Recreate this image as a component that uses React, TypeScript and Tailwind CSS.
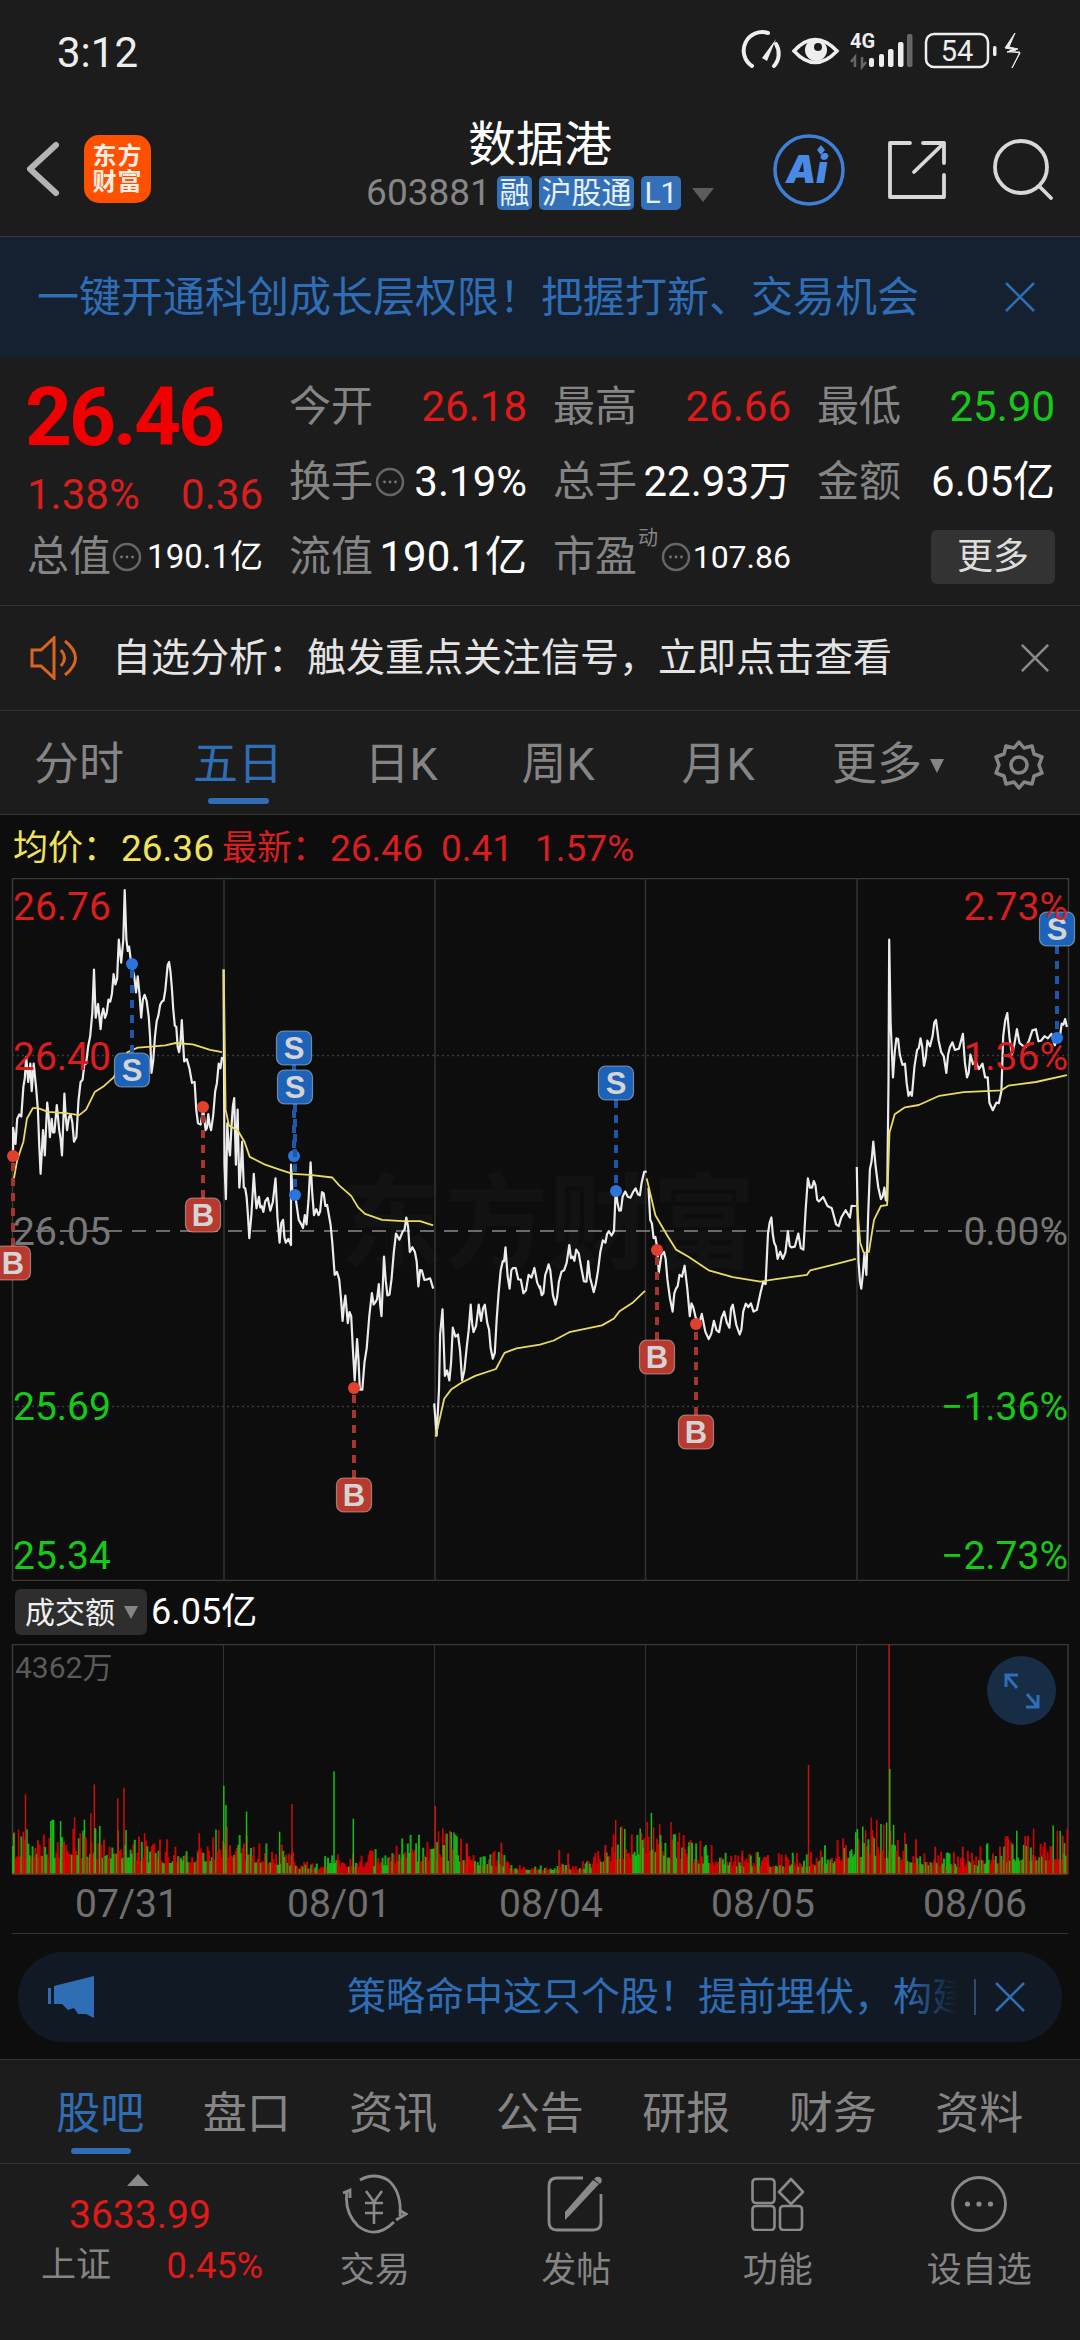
import React from "react";

const L: number[][] = [
  [38,600,38,540,45,575,50,520,62,515,68,450,76,385,82,440,88,400,92,460,98,400,105,455,110,500,118,640,125,545,130,600,137,485,145,560,150,520,158,550,165,490,172,545,180,600,187,465,195,545,205,510,215,570,222,560,228,480,240,435,250,400,262,340,268,290,273,195,278,300,285,270,292,325,300,280,310,290,320,265,330,205,340,215,345,130,352,180,358,130,362,22,367,130,375,145,385,195,395,245,400,210,410,300,420,250,432,300,440,420,450,340,460,295,470,265,480,240,487,185,495,200,503,280,512,320,520,375,528,305,535,395,550,410,565,440,575,530,590,500,597,545,605,510,613,545,625,460,635,400,645,385],
  [649,195,652,620,656,695,660,530,668,600,672,540,680,475,685,620,690,500,695,670,703,570,708,670,716,690,724,780,737,640,745,715,752,690,760,710,770,700,785,720,800,650,812,790,822,740,830,790,845,795,845,620,850,690,860,700,875,750,885,730,890,750,902,615,912,730,925,730,935,680,945,710,955,730,965,790,972,860,985,870,995,960,1003,905,1010,965,1020,950,1030,1090,1037,1000,1045,1110,1052,1110,1065,1020,1080,900,1090,920,1100,880,1108,950,1115,820,1125,905,1137,870,1150,770,1170,765,1180,735,1190,810,1205,810,1215,885,1225,850,1240,870,1258,890],
  [1261,1140,1268,1210,1275,1110,1278,990,1285,935,1292,1080,1305,1090,1315,975,1330,990,1342,1090,1355,1020,1367,925,1375,985,1390,925,1397,960,1408,925,1415,965,1425,1020,1437,1030,1448,900,1460,830,1468,800,1480,890,1490,845,1505,870,1520,900,1535,860,1552,845,1568,890],
];
const R: number[][] = [
  [0,885,10,900,20,850,30,850,45,925,55,875,70,850,85,795,95,820,105,805,120,845,135,875,140,830,150,880,162,880,175,810,190,790,200,765,215,765,220,670,230,720,240,690,255,690,270,680,285,685,295,660,310,635],
  [315,670,320,740,330,780,340,800,345,855,360,810,370,870,385,940,395,890,405,860,420,840,435,950,445,930,460,960,470,945,490,1000,505,960,520,985,535,940,550,975,560,925,580,990,590,940,605,930,620,940,640,900,655,880,662,770,672,735,680,790,690,825,705,825,720,765,730,800,750,770,765,805,778,650,790,670,800,665,810,700,835,710,860,750,875,735,900,735,910,710,917,710],
  [920,625,925,830,933,890,942,815,948,860,958,630,968,570,975,625,990,695,1000,670,1008,700,1012,440,1014,130,1018,310,1025,430,1035,345,1045,380,1060,400,1070,470,1080,470,1095,370,1105,345,1115,405,1125,350,1140,340,1150,305,1165,375,1180,420,1190,365,1205,370,1228,335,1240,430,1250,380,1265,395,1285,400,1300,430,1305,485,1325,485,1340,460,1345,340,1357,290,1370,380,1385,325,1400,360,1420,350,1440,325,1455,350,1475,345,1495,360,1510,340,1520,315,1530,320],
];
const AL: number[][] = [
  [38,660,50,610,68,570,78,520,95,497,110,497,140,505,190,508,230,512,250,500,275,462,300,450,330,430,370,375,400,365,440,363,480,360,510,355,560,358,610,370,645,375],
  [650,195,655,500,665,535,690,545,710,570,725,603,770,620,810,630,850,640,900,642,965,648,985,665,1020,688,1040,713,1060,727,1110,740,1170,743,1220,743,1258,752],
  [1265,1212,1272,1190,1290,1130,1310,1110,1340,1095,1380,1080,1440,1065,1465,1030,1500,1020,1568,1012],
];
const AR: number[][] = [
  [0,1012,40,1003,85,985,180,970,215,955,230,940,270,920,305,895],
  [310,650,335,730,370,775,395,805,430,820,490,850,560,865,640,875,680,870,775,860,785,850,850,838,917,825],
  [920,700,930,790,940,812,955,810,970,740,990,710,1008,708,1015,550,1030,510,1060,495,1100,490,1160,470,1230,462,1340,458,1360,448,1440,440,1530,425],
];

function mulberry(a: number) {
  return () => {
    a |= 0; a = (a + 0x6d2b79f5) | 0;
    let t = Math.imul(a ^ (a >>> 15), 1 | a);
    t = (t + Math.imul(t ^ (t >>> 7), 61 | t)) ^ t;
    return ((t ^ (t >>> 14)) >>> 0) / 4294967296;
  };
}

function toPath(a: number[], off: number) {
  let d = "";
  for (let i = 0; i < a.length; i += 2) {
    d += (i === 0 ? "M" : "L") + (off + a[i] / 2.904).toFixed(1) + " " + (880 + a[i + 1] / 2.178).toFixed(1);
  }
  return d;
}
const jr = mulberry(7);
function jag(a: number[]) {
  const out: number[] = [];
  for (let i = 0; i < a.length - 2; i += 2) {
    out.push(a[i], a[i + 1]);
    const dx = a[i + 2] - a[i];
    if (dx >= 8) {
      const k = jr() > 0.5 ? 1 : -1;
      out.push(a[i] + dx * 0.5, (a[i + 1] + a[i + 3]) / 2 + k * (6 + jr() * 12));
    }
  }
  out.push(a[a.length - 2], a[a.length - 1]);
  return out;
}
const priceD = [
  toPath(jag(L[0]), 0),
  toPath(jag(L[1]), 0),
  toPath(jag(L[2]), 0) + toPath(jag(R[0]), 540).replace("M", "L"),
  toPath(jag(R[1]), 540),
  toPath(jag(R[2]), 540),
].join(" ");
const avgD = [
  toPath(AL[0], 0),
  toPath(AL[1], 0),
  toPath(AL[2], 0) + toPath(AR[0], 540).replace("M", "L"),
  toPath(AR[1], 540),
  toPath(AR[2], 540),
].join(" ");

const marks = [
  { t: "S", x: 132, y: 1070, dy: 964, from: 1053 },
  { t: "S", x: 294, y: 1048, dy: 1156, from: 1065 },
  { t: "S", x: 295, y: 1087, dy: 1195, from: 1104 },
  { t: "S", x: 616, y: 1083, dy: 1191, from: 1100 },
  { t: "S", x: 1057, y: 929, dy: 1038, from: 946 },
  { t: "B", x: 203, y: 1215, dy: 1107, from: 1198 },
  { t: "B", x: 13, y: 1263, dy: 1156, from: 1246 },
  { t: "B", x: 354, y: 1495, dy: 1388, from: 1478 },
  { t: "B", x: 657, y: 1357, dy: 1250, from: 1340 },
  { t: "B", x: 696, y: 1432, dy: 1324, from: 1415 },
];

const spikes: [number, number, number][] = [
  [37,643,1],[137,613,1],[171,655,1],[180,623,1],[132,700,1],[138,745,0],[325,617,0],[328,675,0],[358,695,0],[424,672,1],[406,755,0],[485,574,0],[513,716,0],[632,678,1],[728,788,1],[894,720,1],[949,742,1],[933,780,0],[959,765,0],[1174,555,1],[1291,193,1],[1292,567,0],[1245,747,0],[1267,768,1],[1078,812,1],[1463,768,1],[1543,767,1],[20,760,0],[34,755,1],[55,780,1],[93,785,1],[124,770,1],[183,750,0],[218,815,0],[288,810,1],[348,765,0],[1000,800,0],[1025,795,0],[1115,825,1],[1358,800,1],[1398,800,1],[1433,795,0],[1500,825,1],[812,810,1],[825,820,1],[879,795,1],[678,790,1],[644,795,0]
];
function buildBars() {
  const r = mulberry(42);
  const out: { x: number; h: number; c: string }[] = [];
  for (let x = 13; x < 1068; x += 1.4) {
    const z = x * 1.452;
    let env = 11;
    const bumps = [[40,50,16],[150,60,16],[330,50,14],[630,40,14],[940,50,22],[1250,30,18],[1300,30,12],[1470,30,10],[1540,30,16]];
    for (const [c, w, a] of bumps) env += a * Math.exp(-((z - c) * (z - c)) / (2 * w * w));
    if (z > 740 && z < 860) env *= 0.4;
    if (z > 430 && z < 470) env *= 0.5;
    const v = r();
    const h = 2 + env * (0.45 + v * v * 1.4);
    out.push({ x, h, c: r() > 0.45 ? "#e60000" : "#18c818" });
  }
  for (const [zx, zy, red] of spikes) out.push({ x: zx / 1.452, h: 1874 - (1580 + zy / 3), c: red ? "#d81010" : "#18c818" });
  return out;
}
const bars = buildBars();

function InfoDot({ className = "" }: { className?: string }) {
  return (
    <svg width="30" height="30" viewBox="0 0 30 30" className={className}>
      <circle cx="15" cy="15" r="13" fill="none" stroke="#666" strokeWidth="2.5" />
      <circle cx="9.5" cy="15" r="1.4" fill="#777" />
      <circle cx="15" cy="15" r="1.4" fill="#777" />
      <circle cx="20.5" cy="15" r="1.4" fill="#777" />
    </svg>
  );
}

function Cell({ label, value, color, info }: { label: string; value: string; color: string; info?: boolean }) {
  return (
    <div className="flex items-center justify-between w-[238px]">
      <div className="flex items-center">
        <span className="text-[42px] text-[#858585] leading-none">{label}</span>
        {info && <InfoDot className="ml-[2px]" />}
      </div>
      <span className={`text-[42px] leading-none ${color}`}>{value}</span>
    </div>
  );
}

function StatusIcons() {
  return (
    <svg width="300" height="50" viewBox="0 0 300 50">
      <path d="M22 41 A18.5 18.5 0 0 1 38 8" fill="none" stroke="#eee" strokeWidth="4" strokeLinecap="round" />
      <path d="M46 19 A18.5 18.5 0 0 1 44 41" fill="none" stroke="#eee" strokeWidth="4" strokeLinecap="round" />
      <path d="M32 33 L46 14 L37 36 Z" fill="#eee" />
      <path d="M64 26 Q85 3 107 26 Q85 49 64 26 Z" fill="none" stroke="#eee" strokeWidth="3.5" />
      <circle cx="86" cy="25" r="11" fill="#eee" />
      <circle cx="88" cy="22" r="4" fill="#1c1c1c" />
      <text x="120" y="23" fontSize="20" fontWeight="700" fill="#eee" fontFamily="Roboto, sans-serif">4G</text>
      <path d="M125 42 V32 L121 37 M132 32 V42 L136 37" fill="none" stroke="#666" strokeWidth="2.5" />
      <rect x="139" y="33" width="5" height="9" rx="2" fill="#eee" />
      <rect x="149" y="29" width="5" height="13" rx="2" fill="#eee" />
      <rect x="158" y="24" width="5.5" height="18" rx="2" fill="#eee" />
      <rect x="168" y="17" width="5.5" height="25" rx="2" fill="#eee" />
      <rect x="177" y="9" width="5.5" height="33" rx="2" fill="#666" />
      <rect x="196" y="9" width="62" height="33" rx="8" fill="none" stroke="#eee" strokeWidth="2.5" />
      <text x="227" y="36" fontSize="29" textAnchor="middle" fill="#eee" fontFamily="Roboto, sans-serif">54</text>
      <rect x="263" y="21" width="3.5" height="10" rx="1.5" fill="#eee" />
      <path d="M285 8 L275 23 L286 25 L277 27 L290 27 L282 43 L290 28 L279 26 L288 24 L279 22 Z" fill="#eee" stroke="#eee" strokeWidth="1" />
    </svg>
  );
}

function GearIcon() {
  return (
    <svg width="52" height="52" viewBox="0 0 52 52" fill="none" stroke="#858585" strokeWidth="3.5" strokeLinejoin="round">
      <path d="M26 3 L31 9 L39 7 L41 15 L49 18 L46 26 L49 34 L41 37 L39 45 L31 43 L26 49 L21 43 L13 45 L11 37 L3 34 L6 26 L3 18 L11 15 L13 7 L21 9 Z" />
      <circle cx="26" cy="26" r="8" />
    </svg>
  );
}

function CloseX({ color, size = 32, w = 2.6 }: { color: string; size?: number; w?: number }) {
  return (
    <svg width={size} height={size} viewBox="0 0 32 32" fill="none" stroke={color} strokeWidth={w}>
      <path d="M2 2 L30 30 M30 2 L2 30" />
    </svg>
  );
}

export default function App() {
  return (
    <div className="w-[1080px] h-[2340px] bg-[#1c1c1c] overflow-hidden text-white font-[Roboto,'Noto_Sans_CJK_SC',sans-serif]">
      {/* status */}
      <div className="h-[100px] flex items-start pt-[25px] justify-between pl-[57px] pr-[50px]">
        <span className="text-[42px] leading-[56px] text-[#eeeeee]">3:12</span>
        <StatusIcons />
      </div>
      {/* header */}
      <div className="h-[137px] flex border-b border-[#383c40]">
        <div className="w-[320px] flex items-start pl-[26px] pt-[35px]">
          <svg width="34" height="60" viewBox="0 0 34 60" fill="none" stroke="#b4b4b4" strokeWidth="6" strokeLinecap="round" strokeLinejoin="round" className="mt-[4px]">
            <path d="M30 6 L4 30 L30 54" />
          </svg>
          <div className="ml-[24px] w-[67px] h-[68px] rounded-[15px] bg-[#ff5000] flex flex-col items-center justify-center font-bold text-[24px] leading-[26px] tracking-[1px] text-[#ffeee6]">
            <span>东方</span>
            <span>财富</span>
          </div>
        </div>
        <div className="flex-1 flex flex-col items-center">
          <span className="text-[48px] leading-[62px] mt-[14px] text-white">数据港</span>
          <div className="flex items-center mt-[-1px] h-[36px]">
            <span className="text-[37px] text-[#868686] mr-[6px]">603881</span>
            <span className="h-[34px] w-[35px] bg-[#3470b8] rounded-[5px] text-[30px] leading-[33px] text-center text-[#e8f0fa]">融</span>
            <span className="h-[34px] w-[95px] ml-[7px] bg-[#3470b8] rounded-[5px] text-[30px] leading-[33px] text-center text-[#e8f0fa]">沪股通</span>
            <span className="h-[34px] w-[40px] ml-[7px] bg-[#3470b8] rounded-[5px] text-[30px] leading-[33px] text-center text-[#e8f0fa]">L1</span>
            <svg width="22" height="14" viewBox="0 0 22 14" className="ml-[11px] mt-[4px]"><path d="M0 0 H22 L11 14 Z" fill="#5c5c5c" /></svg>
          </div>
        </div>
        <div className="w-[320px] flex items-start pt-[33px] pl-[12px]">
          <svg width="74" height="74" viewBox="0 0 74 74">
            <circle cx="37" cy="37" r="34" fill="none" stroke="#3f7fd8" strokeWidth="3.5" />
            <text x="14" y="50" fontSize="38" fontWeight="900" fontStyle="italic" fill="#4a8ae6" fontFamily="Inter, sans-serif">Ai</text>
            <path d="M49 12 L53 17 L49 22 L45 17 Z" fill="#4a8ae6" />
          </svg>
          <svg width="60" height="60" viewBox="0 0 60 60" fill="none" stroke="#d8d8d8" strokeWidth="3.8" strokeLinecap="round" strokeLinejoin="round" className="ml-[41px] mt-[7px]">
            <path d="M23 3 H3 V57 H57 V35 M27 32 L57 3 M36 3 H57 V23" />
          </svg>
          <svg width="62" height="62" viewBox="0 0 62 62" fill="none" stroke="#d8d8d8" strokeWidth="3.8" strokeLinecap="round" className="ml-[45px] mt-[5px]">
            <circle cx="29" cy="29" r="26" />
            <path d="M47 48 L59 60" />
          </svg>
        </div>
      </div>
      {/* banner */}
      <div className="h-[120px] bg-[#152130] flex items-center justify-between pl-[37px] pr-[44px]">
        <span className="text-[42px] text-[#2f6db5] whitespace-nowrap">一键开通科创成长层权限！把握打新、交易机会</span>
        <CloseX color="#2f6db5" />
      </div>
      {/* quote */}
      <div className="h-[249px] border-b border-[#333333] pl-[27px] pr-[24px] pt-[12px] grid grid-cols-[262px_264px_264px_238px] grid-rows-[75px_75px_75px]">
        <div className="row-span-2 flex flex-col">
          <span className="text-[82px] leading-[97px] font-bold text-[#f00000] tracking-[-3px] ml-[-2px]">26.46</span>
          <div className="flex justify-between w-[236px] text-[42px] leading-[58px] text-[#d81e1e]">
            <span>1.38%</span>
            <span>0.36</span>
          </div>
        </div>
        <Cell label="今开" value="26.18" color="text-[#e01919]" />
        <Cell label="最高" value="26.66" color="text-[#e01919]" />
        <Cell label="最低" value="25.90" color="text-[#16c916]" />
        <Cell label="换手" value="3.19%" color="text-white" info />
        <Cell label="总手" value="22.93万" color="text-white" />
        <Cell label="金额" value="6.05亿" color="text-white" />
        <div className="flex items-center justify-between w-[236px]">
          <div className="flex items-center">
            <span className="text-[42px] text-[#858585] leading-none">总值</span>
            <InfoDot className="ml-[1px]" />
          </div>
          <span className="text-[33px] leading-none">190.1亿</span>
        </div>
        <Cell label="流值" value="190.1亿" color="text-white" />
        <div className="flex items-center justify-between w-[238px]">
          <div className="flex items-center">
            <span className="text-[42px] text-[#858585] leading-none">市盈</span>
            <span className="text-[20px] leading-none text-[#858585] mb-[38px] ml-[1px]">动</span>
            <InfoDot className="ml-[3px]" />
          </div>
          <span className="text-[32px] leading-none">107.86</span>
        </div>
        <div className="flex items-center justify-end">
          <div className="w-[124px] h-[54px] rounded-[6px] bg-[#333333] text-[#dddddd] text-[36px] leading-[54px] text-center">更多</div>
        </div>
      </div>
      {/* alert */}
      <div className="h-[105px] border-b border-[#333333] flex items-center pl-[30px] pr-[30px]">
        <svg width="50" height="44" viewBox="0 0 50 44" fill="none" stroke="#d9661f" strokeWidth="3">
          <path d="M2 14 H11 L24 2 V42 L11 30 H2 Z" />
          <path d="M31 14 Q38 22 31 30" />
          <path d="M35 5 Q56 22 35 39" />
        </svg>
        <span className="ml-[32px] text-[39px] text-[#e4e4e4] whitespace-nowrap flex-1">自选分析：触发重点关注信号，立即点击查看</span>
        <CloseX color="#8a8a8a" size={30} w={2.8} />
      </div>
      {/* tabs */}
      <div className="h-[104px] pt-[4px] border-b border-[#333333] flex items-center text-[45px] text-[#858585]">
        <div className="w-[158px] text-center">分时</div>
        <div className="w-[160px] text-center text-[#2f6db5] relative">
          五日
          <div className="absolute left-[50px] top-[67px] w-[61px] h-[6px] rounded-full bg-[#2f6db5]" />
        </div>
        <div className="w-[166px] text-center">日K</div>
        <div className="w-[148px] text-center">周K</div>
        <div className="w-[172px] text-center">月K</div>
        <div className="w-[144px] pl-[28px] flex items-center gap-[8px]">
          <span>更多</span>
          <svg width="14" height="16" viewBox="0 0 14 16"><path d="M0 2 H14 L7 16 Z" fill="#858585" /></svg>
        </div>
        <div className="ml-[45px]"><GearIcon /></div>
      </div>
      {/* dark area */}
      <div className="bg-[#0d0d0d]">
        <div className="h-[63px] pt-[5px] flex items-center pl-[13px] text-[37px] whitespace-nowrap">
          <span className="text-[#f0e35a] w-[108px] text-[35px]">均价：</span>
          <span className="text-[#f0e35a] w-[101px]">26.36</span>
          <span className="text-[#d81e1e] w-[108px] text-[35px]">最新：</span>
          <span className="text-[#d81e1e] w-[111px]">26.46</span>
          <span className="text-[#d81e1e] w-[94px]">0.41</span>
          <span className="text-[#d81e1e]">1.57%</span>
        </div>
        {/* main chart */}
        <div className="h-[703px] relative">
          <div className="absolute left-[340px] top-[296px] flex text-[#121212] text-[104px] leading-[104px] font-bold whitespace-nowrap">东方财富</div>
          <svg width="1080" height="703" viewBox="0 878 1080 703" className="absolute left-0 top-0">
            <path d="M12 878.5 H1068.5 V1580.5 H12.5 V878.5" fill="none" stroke="#3a3a3a" strokeWidth="1.5" />
            <path d="M224 878 V1581 M435 878 V1581 M645.5 878 V1581 M857 878 V1581" stroke="#333" strokeWidth="1.5" />
            <path d="M12 1055.5 H1068 M12 1406.5 H1068" stroke="#3a3a3a" strokeWidth="1.5" strokeDasharray="2 3" />
            <path d="M12 1231 H1068" stroke="#8a8a8a" strokeWidth="1.5" strokeDasharray="14 10" />
            <path d={priceD} fill="none" stroke="#ececec" strokeWidth="2.2" strokeLinejoin="round" />
            <path d={avgD} fill="none" stroke="#eadb62" strokeWidth="1.8" strokeLinejoin="round" />
            {marks.map((m, i) => {
              const s = m.t === "S";
              return (
                <g key={i}>
                  <path d={`M${m.x} ${m.from} V${m.dy}`} stroke={s ? "#1d57a8" : "#a8352c"} strokeWidth="4" strokeDasharray="8 7" />
                  <ellipse cx={m.x} cy={m.dy} rx="6" ry="6" fill={s ? "#2a74dd" : "#e2402f"} />
                  <rect x={m.x - 17.5} y={m.y - 17} width="35" height="34" rx="7" fill={s ? "#1c62b9" : "#b83a2e"} stroke="#d9d9d9" strokeOpacity="0.5" strokeWidth="1.2" />
                  <text x={m.x} y={m.y + 11} textAnchor="middle" fontSize="31" fontWeight="700" fill="#d4d4d4" fontFamily="'Liberation Sans', sans-serif">{m.t}</text>
                </g>
              );
            })}
          </svg>
          <div className="absolute left-[13px] top-0 h-full text-[39px] leading-none">
            <span className="absolute top-[10px] text-[#d81e1e]">26.76</span>
            <span className="absolute top-[160px] text-[#d81e1e]">26.40</span>
            <span className="absolute top-[335px] text-[#777777]">26.05</span>
            <span className="absolute top-[510px] text-[#16c916]">25.69</span>
            <span className="absolute top-[659px] text-[#16c916]">25.34</span>
          </div>
          <div className="absolute right-[12px] top-0 h-full text-[39px] leading-none">
            <span className="absolute right-0 top-[10px] text-[#d81e1e]">2.73%</span>
            <span className="absolute right-0 top-[160px] text-[#d81e1e]">1.36%</span>
            <span className="absolute right-0 top-[335px] text-[#777777]">0.00%</span>
            <span className="absolute right-0 top-[510px] text-[#16c916]">−1.36%</span>
            <span className="absolute right-0 top-[659px] text-[#16c916]">−2.73%</span>
          </div>
        </div>
        {/* volume header */}
        <div className="h-[63px] flex items-start pl-[15px] pt-[8px]">
          <div className="w-[132px] h-[46px] bg-[#2e2e2e] rounded-[6px] flex items-center pl-[10px] text-[30px] text-[#f0f0f0]">
            <span>成交额</span>
            <svg width="14" height="14" viewBox="0 0 14 14" className="ml-[9px]"><path d="M0 1 H14 L7 14 Z" fill="#858585" /></svg>
          </div>
          <span className="ml-[4px] text-[36px] leading-[46px]">6.05亿</span>
        </div>
        {/* volume chart */}
        <div className="h-[230px] relative">
          <svg width="1080" height="231" viewBox="0 1644 1080 231" className="absolute left-0 top-0">
            <path d="M12.5 1874 V1644.5 H1068 V1874" fill="none" stroke="#3a3a3a" strokeWidth="1.5" />
            <path d="M223.5 1645 V1874 M434.5 1645 V1874 M645.5 1645 V1874 M856.5 1645 V1874" stroke="#333" strokeWidth="1" />
            {bars.map((b, i) => (
              <line key={i} x1={b.x} x2={b.x} y1={1874} y2={1874 - b.h} stroke={b.c} strokeWidth={b.h > 40 ? 1.5 : 2} strokeOpacity={b.h > 40 ? 0.95 : 0.85} />
            ))}
            <path d="M12 1874 H1068" stroke="#7a3a1a" strokeWidth="1.5" />
          </svg>
          <span className="absolute left-[15px] top-[6px] text-[30px] leading-[36px] text-[#5a5a5a]">4362万</span>
          <div className="absolute left-[987px] top-[12px] w-[69px] h-[69px] rounded-full bg-[#172c45] flex items-center justify-center">
            <svg width="36" height="36" viewBox="0 0 36 36" fill="none" stroke="#2f6db5" strokeWidth="3">
              <path d="M2 14 V2 H14 M2 2 L13 15 M34 22 V34 H22 M34 34 L23 21" />
            </svg>
          </div>
        </div>
        {/* dates */}
        <div className="h-[60px] mx-[12px] border-b border-[#333333] flex pl-[9px] text-[39px] text-[#6f6f6f] leading-[60px]">
          <span className="w-[212px] shrink-0 text-center">07/31</span>
          <span className="w-[212px] shrink-0 text-center">08/01</span>
          <span className="w-[212px] shrink-0 text-center">08/04</span>
          <span className="w-[212px] shrink-0 text-center">08/05</span>
          <span className="w-[212px] shrink-0 text-center">08/06</span>
        </div>
        {/* ad bar */}
        <div className="pt-[18px] pb-[17px] px-[18px] border-b border-[#333333]">
          <div className="h-[90px] rounded-full bg-[#111a24] flex items-center pl-[30px] pr-[38px]">
            <svg width="46" height="42" viewBox="0 0 46 42" fill="#2f6db5" className="shrink-0">
              <path d="M0 12 H3 V28 H0 Z M6 10 L46 0 V42 L38 38 L30 38 L26 32 L20 34 L14 28 H6 Z" />
            </svg>
            <div className="relative ml-[253px] w-[610px] overflow-hidden shrink-0">
              <span className="block text-[39px] leading-[54px] text-[#2f6db5] whitespace-nowrap">策略命中这只个股！提前埋伏，构建投资组合</span>
              <div className="absolute right-0 top-0 bottom-0 w-[50px] bg-gradient-to-r from-transparent to-[#111a24]" />
            </div>
            <div className="w-[1.5px] h-[36px] bg-[#2f4a6a] ml-[17px] shrink-0" />
            <div className="ml-[18px] shrink-0"><CloseX color="#2f6db5" size={32} w={2.6} /></div>
          </div>
        </div>
      </div>
      {/* section tabs */}
      <div className="h-[104px] border-b border-[#333333] flex pl-[27px] text-[44px] leading-[108px] text-[#858585]">
        <div className="w-[146.5px] text-center text-[#2f6db5] relative">
          股吧
          <div className="absolute left-[44px] top-[88px] w-[60px] h-[6px] rounded-full bg-[#2f6db5]" />
        </div>
        <div className="w-[146.5px] text-center">盘口</div>
        <div className="w-[146.5px] text-center">资讯</div>
        <div className="w-[146.5px] text-center">公告</div>
        <div className="w-[146.5px] text-center">研报</div>
        <div className="w-[146.5px] text-center">财务</div>
        <div className="w-[146.5px] text-center">资料</div>
      </div>
      {/* bottom nav */}
      <div className="flex pt-[5px]">
        <div className="w-[274px] flex flex-col pt-[3px]">
          <svg width="22" height="12" viewBox="0 0 22 12" className="ml-[127px] mt-[2px]"><path d="M0 12 L11 0 L22 12 Z" fill="#8a8a8a" /></svg>
          <span className="ml-[69px] mt-[2px] text-[39px] leading-[54px] text-[#e01919]">3633.99</span>
          <div className="flex items-center justify-between pl-[41px] pr-[11px] mt-[-3px] h-[54px]">
            <span className="text-[35px] text-[#858585]">上证</span>
            <span className="text-[36px] text-[#e01919]">0.45%</span>
          </div>
        </div>
        <div className="w-[201.5px] flex flex-col items-center text-[35px] text-[#858585]">
          <svg width="66" height="60" viewBox="0 0 66 60" fill="none" stroke="#8a8a8a" strokeWidth="2.8" className="mt-[5px]">
            <path d="M18 6 Q32 -2 46 6 Q60 18 58 42" />
            <path d="M52 48 Q34 66 16 52 Q2 38 5 18" />
            <path d="M1 19 L8 16 L8 24" />
            <path d="M54 46 L64 40 L57 36" />
            <path d="M24 17 L32 28 L40 17 M23 29 H41 M23 39 H41 M32 28 V50" strokeWidth="2.6" />
          </svg>
          <span className="leading-[44px] mt-[15px]">交易</span>
        </div>
        <div className="w-[201.5px] flex flex-col items-center text-[35px] text-[#858585]">
          <svg width="58" height="56" viewBox="0 0 58 56" fill="none" stroke="#8a8a8a" strokeWidth="2.8" className="mt-[7px]">
            <path d="M36 2 H10 Q2 2 2 10 V46 Q2 54 10 54 H46 Q54 54 54 46 V18" />
            <path d="M18 36 L46 4 L52 8 L24 38 L18 44 Z" fill="#8a8a8a" stroke="none" />
            <path d="M47 3 Q50 -1 54 2 Q56 5 53 8 Z" fill="#8a8a8a" stroke="none" />
          </svg>
          <span className="leading-[44px] mt-[17px]">发帖</span>
        </div>
        <div className="w-[201.5px] flex flex-col items-center text-[35px] text-[#858585]">
          <svg width="54" height="54" viewBox="0 0 54 54" fill="none" stroke="#8a8a8a" strokeWidth="2.6" strokeLinejoin="round" className="mt-[8px]">
            <rect x="1.5" y="2" width="22" height="24" rx="3.5" />
            <path d="M40 2 L52 15 L40 27 L28 15 Z" />
            <rect x="1.5" y="29" width="22" height="24" rx="3.5" />
            <rect x="29" y="29" width="22" height="24" rx="3.5" />
          </svg>
          <span className="leading-[44px] mt-[18px]">功能</span>
        </div>
        <div className="w-[201.5px] flex flex-col items-center text-[35px] text-[#858585]">
          <svg width="56" height="56" viewBox="0 0 56 56" fill="none" stroke="#8a8a8a" strokeWidth="2.8" className="mt-[7px]">
            <circle cx="28" cy="28" r="26.5" />
            <circle cx="16.5" cy="28" r="2.6" fill="#8a8a8a" stroke="none" />
            <circle cx="28" cy="28" r="2.6" fill="#8a8a8a" stroke="none" />
            <circle cx="39.5" cy="28" r="2.6" fill="#8a8a8a" stroke="none" />
          </svg>
          <span className="leading-[44px] mt-[17px]">设自选</span>
        </div>
      </div>
    </div>
  );
}
